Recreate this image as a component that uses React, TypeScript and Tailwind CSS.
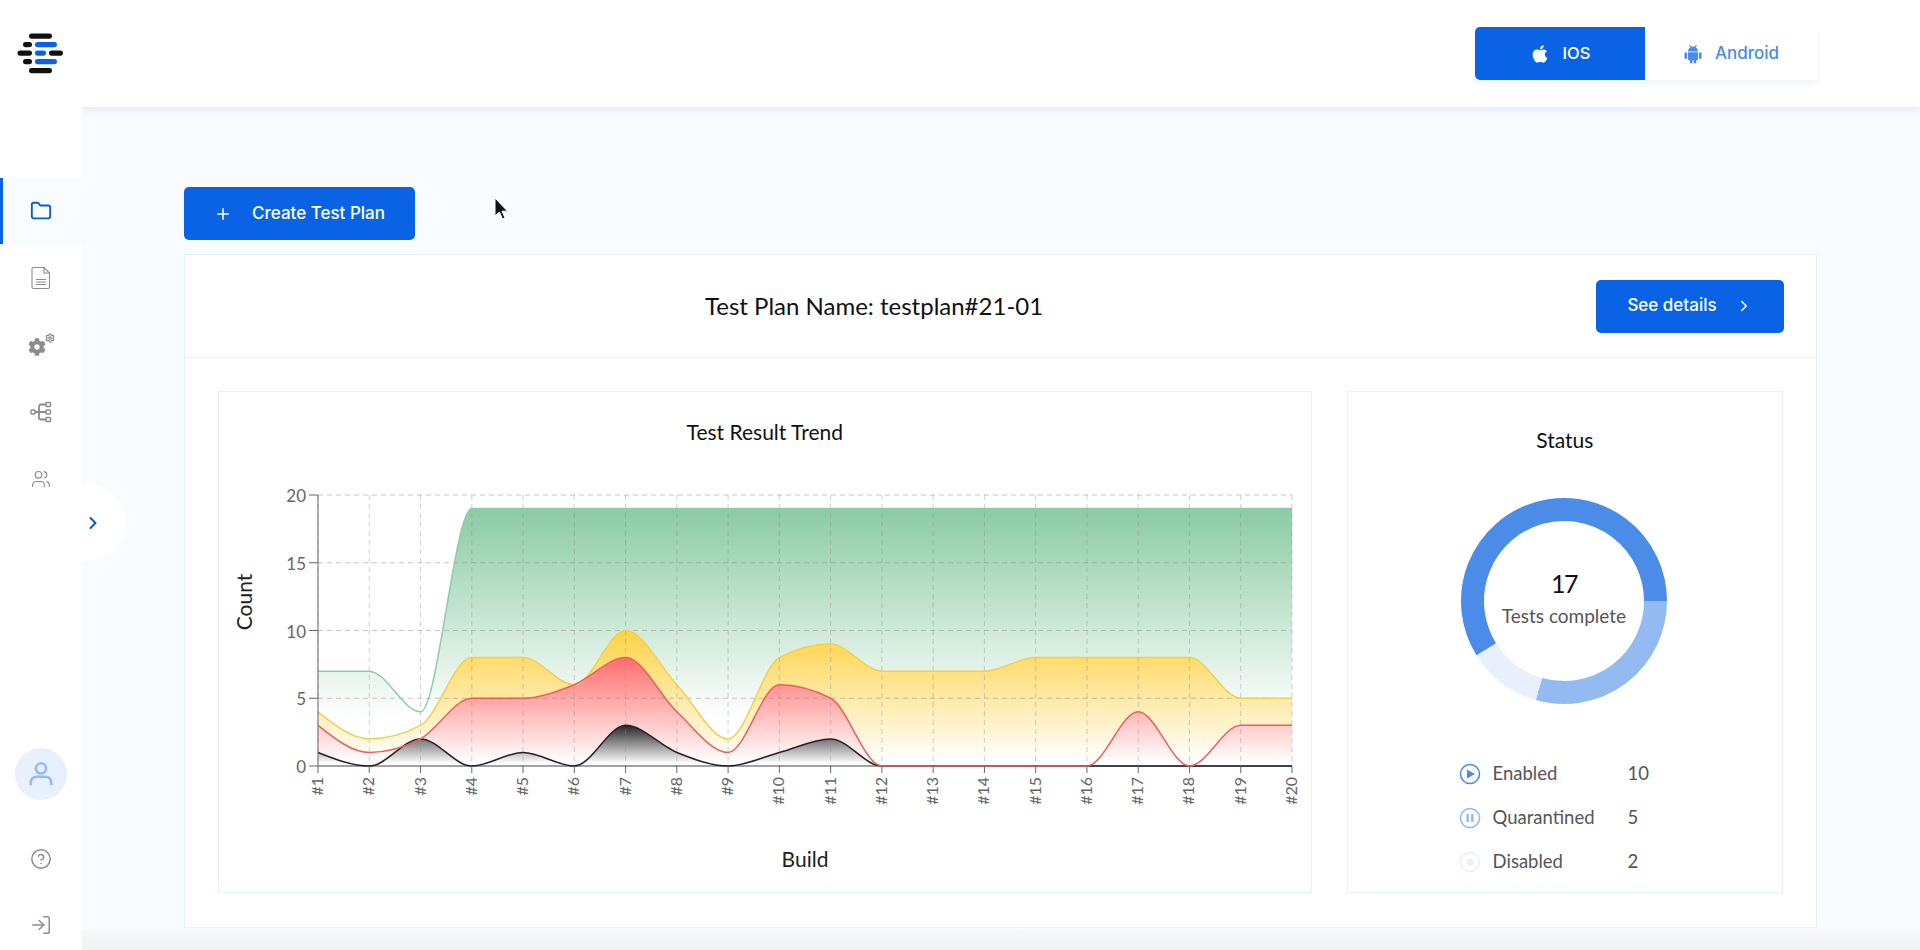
import { ChevronRight, CircleHelp, Folder, LogIn, Plus, Settings, Users } from 'lucide-react';
import { FaApple, FaCog } from 'react-icons/fa';

const X0 = 99;
const X1 = 1073;
const Y0 = 296;
const Y20 = 25;

const px = (i: number) => X0 + (i * (X1 - X0)) / 19;
const py = (v: number) => Y0 - (v * (Y0 - Y20)) / 20;

const green = [7, 7, 4, 19, 19, 19, 19, 19, 19, 19, 19, 19, 19, 19, 19, 19, 19, 19, 19, 19];
const yellow = [4, 2, 3, 8, 8, 6, 10, 6, 2, 8, 9, 7, 7, 7, 8, 8, 8, 8, 5, 5];
const red = [3, 1, 2, 5, 5, 6, 8, 4, 1, 6, 5, 0, 0, 0, 0, 0, 4, 0, 3, 3];
const black = [1, 0, 2, 0, 1, 0, 3, 1, 0, 1, 2, 0, 0, 0, 0, 0, 0, 0, 0, 0];

// same maths as d3's monotoneX, the chart in the picture clearly uses it
function curve(values: number[]) {
  const pts = values.map((v, i) => [px(i), py(v)]);
  const n = pts.length;
  const h = pts[1][0] - pts[0][0];
  const s: number[] = [];
  for (let i = 0; i < n - 1; i++) s.push((pts[i + 1][1] - pts[i][1]) / h);
  const t: number[] = new Array(n).fill(0);
  for (let i = 1; i < n - 1; i++) {
    const a = s[i - 1];
    const b = s[i];
    t[i] = a * b <= 0 ? 0 : (Math.sign(a) + Math.sign(b)) * Math.min(Math.abs(a), Math.abs(b), 0.25 * Math.abs(a + b));
  }
  t[0] = (3 * s[0] - t[1]) / 2;
  t[n - 1] = (3 * s[n - 2] - t[n - 2]) / 2;
  let d = `M${pts[0][0]},${pts[0][1]}`;
  for (let i = 0; i < n - 1; i++) {
    const dx = h / 3;
    d += `C${pts[i][0] + dx},${pts[i][1] + dx * t[i]} ${pts[i + 1][0] - dx},${pts[i + 1][1] - dx * t[i + 1]} ${pts[i + 1][0]},${pts[i + 1][1]}`;
  }
  return d;
}

const series = [
  { id: 'g', values: green, line: '#8fcba8' },
  { id: 'y', values: yellow, line: '#f3cf4e' },
  { id: 'r', values: red, line: '#e8615f' },
  { id: 'b', values: black, line: '#222222' },
];

// red sits on top of black along the baseline from #12 to #16
const lineOrder = [series[0], series[1], series[3], series[2]];

function Gradient({ id, from, to, color }: { id: string; from: number; to: number; color: string }) {
  return (
    <linearGradient id={id} gradientUnits="userSpaceOnUse" x1="0" x2="0" y1={py(from)} y2={py(to)}>
      <stop offset="0" stopColor={color} />
      <stop offset="1" stopColor="#ffffff" />
    </linearGradient>
  );
}

function TrendChart() {
  return (
    <svg width="1090" height="408" className="block">
      <defs>
        <Gradient id="g" from={19} to={3.6} color="#8bcba4" />
        <Gradient id="y" from={10} to={0.4} color="#fdd245" />
        <Gradient id="r" from={8} to={0.3} color="#ff6e6c" />
        <Gradient id="b" from={3} to={0.2} color="#262626" />
      </defs>

      {series.map((s) => (
        <path key={s.id} d={`${curve(s.values)}L${X1},${Y0}L${X0},${Y0}Z`} fill={`url(#${s.id})`} />
      ))}

      {[5, 10, 15, 20].map((v) => (
        <line key={v} x1={X0} x2={X1} y1={py(v)} y2={py(v)} stroke="#8d8d8d" strokeOpacity="0.5" strokeDasharray="5 4" />
      ))}
      {green.map((_, i) => (
        <line key={i} x1={px(i)} x2={px(i)} y1={Y20} y2={Y0} stroke="#8d8d8d" strokeOpacity="0.4" strokeDasharray="5 4" />
      ))}

      <line x1={X0} x2={X1} y1={Y0} y2={Y0} stroke="#444444" />
      {lineOrder.map((s) => (
        <path key={s.id} d={curve(s.values)} fill="none" stroke={s.line} strokeWidth="1.5" />
      ))}
      <line x1={X0} x2={X0} y1={Y20} y2={Y0} stroke="#666666" />

      {[0, 5, 10, 15, 20].map((v) => (
        <g key={v}>
          <line x1={X0 - 9} x2={X0} y1={py(v)} y2={py(v)} stroke="#666666" />
          <text x={X0 - 12} y={py(v) + 7} textAnchor="end" fontSize="17" fill="#666666">
            {v}
          </text>
        </g>
      ))}
      {green.map((_, i) => (
        <g key={i}>
          <line x1={px(i)} x2={px(i)} y1={Y0} y2={Y0 + 7} stroke="#666666" />
          <text
            transform={`translate(${px(i) + 5},${Y0 + 11}) rotate(-90)`}
            textAnchor="end"
            fontSize="16"
            fill="#666666"
          >
            #{i + 1}
          </text>
        </g>
      ))}

      <text transform="translate(33,132) rotate(-90)" textAnchor="middle" fontSize="21" fill="#222222">
        Count
      </text>
      <text x="586" y="397" textAnchor="middle" fontSize="21" fill="#222222">
        Build
      </text>
    </svg>
  );
}

function arc(start: number, end: number) {
  const r = 91.5;
  const c = 104;
  const a = (start * Math.PI) / 180;
  const b = (end * Math.PI) / 180;
  const large = end - start > 180 ? 1 : 0;
  return `M${c + r * Math.cos(a)},${c + r * Math.sin(a)}A${r},${r} 0 ${large} 1 ${c + r * Math.cos(b)},${c + r * Math.sin(b)}`;
}

function Donut() {
  return (
    <svg width="208" height="208" className="block">
      <path d={arc(0, 105.9)} fill="none" stroke="#93bbf2" strokeWidth="23" />
      <path d={arc(105.9, 148.2)} fill="none" stroke="#e8f0fd" strokeWidth="23" />
      <path d={arc(148.2, 360)} fill="none" stroke="#4a8ce8" strokeWidth="23" />
      <text x="104" y="96" textAnchor="middle" fontSize="25" letterSpacing="-1.5" fill="#111111">
        17
      </text>
      <text x="104" y="126" textAnchor="middle" fontSize="19" fill="#555555">
        Tests complete
      </text>
    </svg>
  );
}

function LegendIcon({ kind }: { kind: 'play' | 'pause' | 'off' }) {
  const color = kind === 'play' ? '#4a8ce8' : kind === 'pause' ? '#93bbf2' : '#e8f0fd';
  return (
    <svg width="22" height="22" viewBox="0 0 22 22" className="shrink-0">
      <circle cx="11" cy="11" r="9.5" fill="none" stroke={color} strokeWidth="1.6" />
      {kind === 'play' && <path d="M8 6.5L16 11L8 15.5Z" fill={color} />}
      {kind === 'pause' && <path d="M7.5 7h2.4v8H7.5ZM12.1 7h2.4v8h-2.4Z" fill={color} />}
      {kind === 'off' && <circle cx="11" cy="11" r="3.5" fill={color} />}
    </svg>
  );
}

function LegendRow({ kind, label, count }: { kind: 'play' | 'pause' | 'off'; label: string; count: number }) {
  return (
    <div className="flex h-6 items-center text-[18.5px] text-[#555555]">
      <LegendIcon kind={kind} />
      <span className="ml-[12px] w-[135px]">{label}</span>
      <span>{count}</span>
    </div>
  );
}

function Logo() {
  const bars = [
    { x: 29, y: 33.5, w: 23, c: '#111111' },
    { x: 23, y: 42, w: 9, c: '#111111' },
    { x: 35, y: 42, w: 22, c: '#0a63e4' },
    { x: 17.5, y: 50.5, w: 14.5, c: '#111111' },
    { x: 35, y: 50.5, w: 11, c: '#0a63e4' },
    { x: 49, y: 50.5, w: 14, c: '#111111' },
    { x: 23, y: 59, w: 9, c: '#111111' },
    { x: 35, y: 59, w: 22, c: '#0a63e4' },
    { x: 29, y: 68, w: 23, c: '#111111' },
  ];
  return (
    <svg width="82" height="107" className="block">
      {bars.map((b, i) => (
        <rect key={i} x={b.x} y={b.y} width={b.w} height="5.2" rx="2.6" fill={b.c} />
      ))}
    </svg>
  );
}

function DocIcon() {
  return (
    <svg width="20" height="24" viewBox="0 0 20 24" fill="none" stroke="#8c8c8c" strokeWidth="1.1">
      <path d="M2.5 1.5H13L18.5 7V21a1.5 1.5 0 0 1-1.5 1.5H2.5A1.5 1.5 0 0 1 1 21V3a1.5 1.5 0 0 1 1.5-1.5Z" />
      <path d="M13 1.5V7H18.5M5 13.5H15M5 16H15M5 18.5H15" />
    </svg>
  );
}

function GearsIcon() {
  return (
    <div className="flex items-start">
      <FaCog className="mt-[5px] text-[#8c8c8c]" size={18} />
      <Settings className="-ml-[1px] text-[#8c8c8c]" size={10} strokeWidth={3} />
    </div>
  );
}

function TreeIcon() {
  return (
    <svg width="22" height="22" viewBox="0 0 22 22" fill="none" stroke="#8c8c8c" strokeWidth="1.4">
      <rect x="1" y="9" width="4" height="4" rx="0.8" />
      <rect x="16" y="1.5" width="4.5" height="4" rx="0.8" />
      <rect x="16" y="9" width="4.5" height="4" rx="0.8" />
      <rect x="16" y="16.5" width="4.5" height="4" rx="0.8" />
      <path d="M5 11H16M9 11V5.5A2 2 0 0 1 11 3.5H16M9 11V16.5A2 2 0 0 0 11 18.5H16" strokeWidth="1.8" />
    </svg>
  );
}

function AvatarIcon() {
  return (
    <svg width="26" height="28" viewBox="0 0 28 28" fill="none" stroke="#93bbf2" strokeWidth="2.8">
      <circle cx="14" cy="8" r="5.5" />
      <path d="M3 26V23A6 6 0 0 1 9 17H19A6 6 0 0 1 25 23V26" />
    </svg>
  );
}

function AndroidIcon() {
  return (
    <svg width="20" height="22" viewBox="0 0 24 24" fill="currentColor">
      <path d="M6 9a6 6 0 0 1 12 0Z" />
      <path d="M8 1.5l2 3M16 1.5l-2 3" stroke="currentColor" strokeWidth="1.3" strokeLinecap="round" />
      <path d="M6 10h12v8a1.5 1.5 0 0 1-1.5 1.5h-9A1.5 1.5 0 0 1 6 18Z" />
      <rect x="1.8" y="10" width="3" height="8" rx="1.5" />
      <rect x="19.2" y="10" width="3" height="8" rx="1.5" />
      <rect x="8.2" y="18" width="3" height="5.5" rx="1.5" />
      <rect x="12.8" y="18" width="3" height="5.5" rx="1.5" />
    </svg>
  );
}

const navItems = [
  <DocIcon key="doc" />,
  <GearsIcon key="gears" />,
  <TreeIcon key="tree" />,
  <Users key="users" size={20} strokeWidth={1.4} className="text-[#8c8c8c]" />,
];

function Sidebar() {
  return (
    <aside className="relative z-10 flex h-full w-[82px] shrink-0 flex-col bg-white">
      <Logo />
      <div className="mt-[71px] flex h-[66px] items-center justify-center border-l-[3px] border-[#0a63e4] bg-[#f8fbff] pr-[3px]">
        <Folder size={22} strokeWidth={2} className="text-[#0a5cd0]" />
      </div>
      {navItems.map((icon, i) => (
        <div key={i} className="flex h-[67px] items-center justify-center">
          {icon}
        </div>
      ))}
      <div className="absolute left-[82px] top-[484px] flex h-[77px] w-[44px] items-center rounded-r-full bg-white pl-[1px]">
        <ChevronRight size={20} strokeWidth={2.5} className="text-[#0a5cd0]" />
      </div>
      <div className="mt-auto flex flex-col items-center">
        <div className="flex h-[52px] w-[52px] items-center justify-center rounded-full bg-[#e8f0fd]">
          <AvatarIcon />
        </div>
        <div className="mt-[47px] flex h-[24px] items-center">
          <CircleHelp size={22} strokeWidth={1.6} className="text-[#8c8c8c]" />
        </div>
        <div className="mb-[13px] mt-[42px] flex h-[24px] items-center">
          <LogIn size={22} strokeWidth={1.6} className="text-[#8c8c8c]" />
        </div>
      </div>
    </aside>
  );
}

function PlatformToggle() {
  return (
    <div className="mr-[103px] flex h-[53px] w-[342px] shadow-[0_4px_6px_rgba(30,60,110,0.06)] [font-family:Inter,sans-serif]">
      <div className="flex w-[170px] items-center justify-center gap-[13px] rounded-l-[5px] bg-[#0a63e4] text-[16.5px] font-medium text-white">
        <FaApple size={20} />
        <span>IOS</span>
      </div>
      <div className="flex flex-1 items-center justify-center gap-[12px] bg-white text-[17px] font-medium text-[#4a8ce8]">
        <AndroidIcon />
        <span>Android</span>
      </div>
    </div>
  );
}

export default function App() {
  return (
    <div className="relative flex h-[950px] w-[1920px] overflow-hidden bg-[#f8fbff] text-[#111111] [font-family:Lato,'Liberation_Sans',sans-serif]">
      <Sidebar />

      <main className="flex min-w-0 flex-1 flex-col">
        <header className="flex h-[107px] shrink-0 items-center justify-end bg-white shadow-[0_2px_8px_rgba(30,50,90,0.10)]">
          <PlatformToggle />
        </header>

        <div className="flex-1 pl-[102px] pr-[103px] pt-[80px]">
          <button className="flex h-[53px] w-[231px] items-center justify-center gap-[20px] rounded-[5px] bg-[#0a63e4] text-[17px] font-medium text-white [font-family:Inter,sans-serif]">
            <Plus size={18} strokeWidth={2} />
            <span>Create Test Plan</span>
          </button>

          <section className="mt-[14px] h-[674px] border border-[#e8f0fb] bg-white">
            <div className="flex h-[103px] items-center border-b border-[#e8f0fb]">
              <h1 className="ml-[520px] text-[24px] font-normal text-[#111111]">Test Plan Name: testplan#21-01</h1>
              <button className="ml-auto mr-[32px] flex h-[53px] w-[188px] items-center justify-center gap-[18px] rounded-[5px] bg-[#0a63e4] text-[17px] font-medium text-white [font-family:Inter,sans-serif]">
                <span>See details</span>
                <ChevronRight size={18} strokeWidth={2} />
              </button>
            </div>

            <div className="flex gap-[35px] px-[33px] pt-[33px]">
              <div className="h-[502px] w-[1095px] border border-[#e8f0fb]">
                <div className="h-[78px] pt-[28px] text-center text-[21px] leading-6">Test Result Trend</div>
                <TrendChart />
              </div>

              <div className="flex h-[502px] w-[437px] flex-col border border-[#e8f0fb]">
                <div className="pt-[36px] text-center text-[21px] leading-6">Status</div>
                <div className="mr-[2px] mt-[45px] flex justify-center">
                  <Donut />
                </div>
                <div className="ml-[111px] mt-[57px] flex flex-col gap-5">
                  <LegendRow kind="play" label="Enabled" count={10} />
                  <LegendRow kind="pause" label="Quarantined" count={5} />
                  <LegendRow kind="off" label="Disabled" count={2} />
                </div>
              </div>
            </div>
          </section>
        </div>

        <div className="h-[20px] shrink-0 bg-gradient-to-b from-[#f7f8f9] to-[#f1f2f3]" />
      </main>

      {/* mouse pointer from the recording */}
      <svg width="14" height="24" viewBox="0 0 14 24" className="absolute left-[494px] top-[197px]">
        <path d="M1 1V19L5.5 15L8.5 22L11 21L8 14.2H13.5Z" fill="#111111" stroke="#ffffff" strokeWidth="1" />
      </svg>
    </div>
  );
}
